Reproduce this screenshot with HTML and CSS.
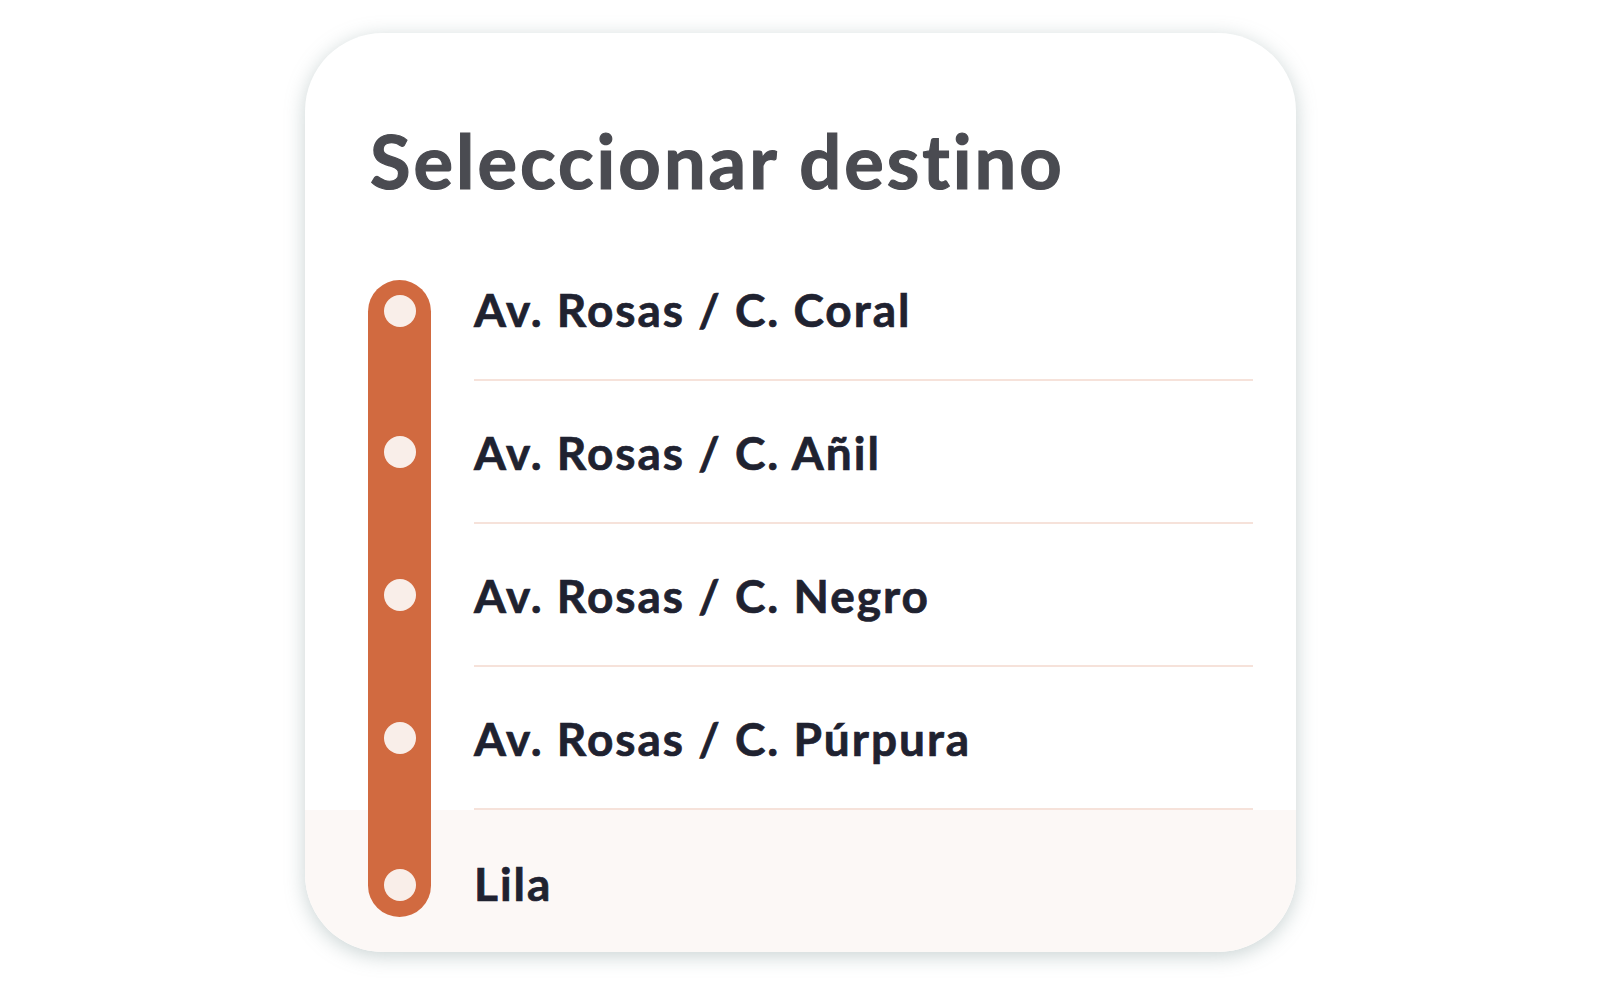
FILE: index.html
```html
<!DOCTYPE html>
<html lang="es">
<head>
<meta charset="utf-8">
<title>Seleccionar destino</title>
<link rel="stylesheet" href="styles.css">
</head>
<body>
<main class="card">
  <h1 class="title">Seleccionar destino</h1>
  <ol class="route">
    <li class="track" aria-hidden="true"></li>
    <li class="highlight" aria-hidden="true"></li>

    <li class="dot r1"></li>
    <li class="name r1">Av. Rosas / C. Coral</li>

    <li class="dot r2"></li>
    <li class="name r2">Av. Rosas / C. Añil</li>

    <li class="dot r3"></li>
    <li class="name r3">Av. Rosas / C. Negro</li>

    <li class="dot r4"></li>
    <li class="name r4">Av. Rosas / C. Púrpura</li>

    <li class="dot r5"></li>
    <li class="name r5 last">Lila</li>
  </ol>
</main>
</body>
</html>
```

FILE: styles.css
```css
html, body {
  margin: 0;
  padding: 0;
  background: #ffffff;
}

body {
  height: 100vh;
  display: flex;
  align-items: center;
  justify-content: center;
  font-family: "Lato", "Noto Sans", sans-serif;
}

.card {
  box-sizing: border-box;
  width: 991px;
  height: 919px;
  margin-left: 1px;
  padding: 91px 43px 0 63px;
  background: #ffffff;
  border-radius: 78px;
  overflow: hidden;
  box-shadow: 0 4px 20px rgba(120, 145, 145, 0.4);
}

.title {
  margin: 0 0 40px 2px;
  font-size: 74px;
  line-height: 1;
  font-weight: 700;
  color: #4a4b51;
  letter-spacing: 3px;
  -webkit-text-stroke: 1.2px #4a4b51;
  white-space: nowrap;
}

.route {
  list-style: none;
  margin: 0;
  padding: 0;
  display: grid;
  grid-template-columns: 63px 1fr;
  grid-template-rows: repeat(4, 143px) 152px;
  column-gap: 43px;
}

.route .track {
  grid-column: 1;
  grid-row: 1 / 6;
  margin: 42px 0 45px 0;
  background: #d16a40;
  border-radius: 32px;
  z-index: 1;
}

.route .highlight {
  grid-column: 1 / -1;
  grid-row: 5;
  margin: 0 -43px 0 -63px;
  background: #fcf8f6;
  z-index: 0;
}

.route .dot {
  grid-column: 1;
  justify-self: center;
  align-self: center;
  width: 32px;
  height: 32px;
  border-radius: 50%;
  background: #f9eee9;
  z-index: 2;
}

.route .name {
  grid-column: 2;
  display: flex;
  align-items: center;
  box-sizing: border-box;
  border-bottom: 2px solid #f6e2da;
  padding-top: 3px;
  font-size: 46px;
  line-height: 1;
  font-weight: 700;
  color: #1f2230;
  letter-spacing: 2px;
  -webkit-text-stroke: 0.7px #1f2230;
  white-space: nowrap;
  z-index: 2;
}

.route .name.last {
  border-bottom: none;
  padding-top: 0;
  padding-bottom: 4px;
}

.r1 { grid-row: 1; }
.r2 { grid-row: 2; }
.r3 { grid-row: 3; }
.r4 { grid-row: 4; }
.r5 { grid-row: 5; }

.route .dot.r1 { margin-top: 4px; }
.route .dot.r5 { margin-top: -2px; }
```
